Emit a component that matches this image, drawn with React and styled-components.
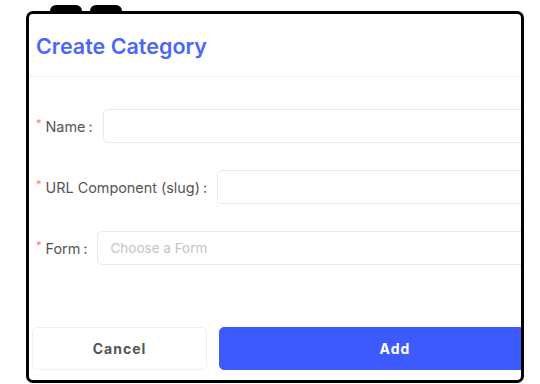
import React from "react";
import styled, { createGlobalStyle } from "styled-components";

const Global = createGlobalStyle`
  html, body { margin: 0; padding: 0; background: #fff; }
  body { font-family: Inter, "Noto Sans", "Liberation Sans", sans-serif; }
  * { box-sizing: border-box; }
`;

const Device = styled.div`
  margin: 5px 0 0 26px;
  width: 498px;
  display: flex;
  flex-direction: column;
`;

const TabRow = styled.div`
  display: flex;
  gap: 8px;
  padding-left: 24px;
  height: 6px;
`;

const Tab = styled.div`
  width: 32px;
  height: 6px;
  background: #000;
  border-radius: 7px 7px 0 0;
`;

const Frame = styled.div`
  width: 498px;
  height: 372px;
  border: 3px solid #000;
  border-radius: 7px;
  overflow: hidden;
  background: #fff;
`;

const Modal = styled.div`
  width: 546px;
  display: flex;
  flex-direction: column;
`;

const Header = styled.div`
  height: 63px;
  display: flex;
  align-items: center;
  padding: 2px 7px 0;
  border-bottom: 1.5px solid #f1f1f1;
`;

const Title = styled.h2`
  margin: 0;
  font-size: 21.5px;
  font-weight: 600;
  color: #4b67f6;
`;

const Form = styled.div`
  display: flex;
  flex-direction: column;
  gap: 27px;
  padding: 32px 4px 0 7px;
`;

const Row = styled.div`
  display: flex;
  align-items: center;
  height: 34px;
`;

const Label = styled.label`
  display: flex;
  align-items: center;
  font-size: 14.4px;
  color: #555;
  white-space: nowrap;
  margin-right: 10px;
`;

const Req = styled.span`
  color: #f77;
  font-size: 11px;
  margin-right: 4px;
  position: relative;
  top: -3px;
`;

const Colon = styled.span`
  margin-left: 3px;
`;

const Input = styled.input`
  flex: 1;
  height: 34px;
  border: 1.5px solid #e8e8e8;
  border-radius: 5px;
  padding: 0 12px;
  font-family: inherit;
  font-size: 13.5px;
  color: #333;
  outline: none;
  &::placeholder { color: #c4c4c4; }
`;

const Footer = styled.div`
  display: flex;
  gap: 12px;
  padding: 0 4px 0 3px;
  margin-top: 62px;
`;

const Button = styled.button`
  flex: ${(p) => (p.$primary ? "1 1 auto" : "0 0 175px")};
  height: 43px;
  border-radius: 5px;
  border: 1.5px solid ${(p) => (p.$primary ? "#3d5afe" : "#f0f0f0")};
  background: ${(p) => (p.$primary ? "#3d5afe" : "#fff")};
  color: ${(p) => (p.$primary ? "#fff" : "#555")};
  font-family: inherit;
  font-size: 14px;
  font-weight: 700;
  letter-spacing: 1px;
`;

function Field({ label, placeholder }) {
  return (
    <Row>
      <Label>
        <Req>*</Req>
        {label}
        <Colon>:</Colon>
      </Label>
      <Input placeholder={placeholder} />
    </Row>
  );
}

export default function App() {
  return (
    <>
      <Global />
      <Device>
        <TabRow>
          <Tab />
          <Tab />
        </TabRow>
        <Frame>
          <Modal>
            <Header>
              <Title>Create Category</Title>
            </Header>
            <Form>
              <Field label="Name" />
              <Field label="URL Component (slug)" />
              <Field label="Form" placeholder="Choose a Form" />
            </Form>
            <Footer>
              <Button>Cancel</Button>
              <Button $primary>Add</Button>
            </Footer>
          </Modal>
        </Frame>
      </Device>
    </>
  );
}
